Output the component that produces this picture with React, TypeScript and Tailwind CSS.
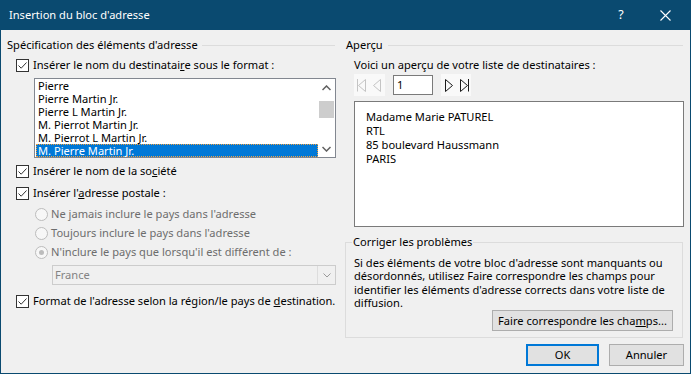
import React from "react";

function CheckBox() {
  return (
    <span className="w-[13px] h-[13px] border border-[#333333] bg-white flex items-center justify-center shrink-0">
      <svg width="11" height="11" viewBox="0 0 11 11">
        <path d="M1.5 5.5 L4.2 8.2 L9.5 2.5" stroke="#333333" strokeWidth="1" fill="none" />
      </svg>
    </span>
  );
}

function Radio({ on }: { on?: boolean }) {
  return (
    <span className="w-[13px] h-[13px] rounded-full border border-[#bcbcbc] bg-[#f7f7f7] flex items-center justify-center shrink-0">
      {on && <span className="w-[5px] h-[5px] rounded-full bg-[#bcbcbc]" />}
    </span>
  );
}

const items = [
  "Pierre",
  "Pierre Martin Jr.",
  "Pierre L Martin Jr.",
  "M. Pierrot Martin Jr.",
  "M. Pierrot L Martin Jr.",
  "M. Pierre Martin Jr.",
];

export default function App() {
  return (
    <div className="w-[691px] h-[374px] bg-[#f0f0f0] border-x border-b border-[#0a4a70] flex flex-col font-['Noto_Sans',sans-serif] text-[11.1px] leading-[16px] text-black overflow-hidden">
      {/* Title bar */}
      <div className="h-[30px] bg-[#0a4a70] flex items-center text-white shrink-0 -mx-px">
        <span className="ml-[9px] flex-1">Insertion du bloc d'adresse</span>
        <span className="w-[14px] text-center text-[12.5px] mr-[32px]">?</span>
        <svg width="11" height="11" viewBox="0 0 11 11" className="mr-[20px]">
          <path d="M0.5 0.5 L10.5 10.5 M10.5 0.5 L0.5 10.5" stroke="white" strokeWidth="1.1" />
        </svg>
      </div>

      <div className="flex flex-1">
        {/* Left column */}
        <div className="w-[339px] flex flex-col pr-[5px] whitespace-nowrap">
          <div className="mt-[7px] h-[16px] flex items-center pl-[6px]">
            <span>Spécification des éléments d'adresse</span>
            <span className="flex-1 h-px bg-[#dcdcdc] ml-[4px]" />
          </div>
          <div className="mt-[4px] h-[16px] flex items-center pl-[15px] gap-[4px]">
            <CheckBox />
            <span>
              Insérer le nom du destinatai<u>r</u>e sous le format :
            </span>
          </div>
          <div className="mt-[5px] ml-[33px] w-[302px] h-[80px] border border-[#828790] bg-white flex">
            <div className="flex-1 flex flex-col">
              {items.map((t, i) => (
                <div
                  key={t}
                  className={
                    i === 5
                      ? "h-[13px] ml-px leading-[11px] pl-[1px] bg-[#0078d7] text-white border border-dotted border-[#f0a040]"
                      : "h-[13px] leading-[13px] pl-[3px]"
                  }
                >
                  {t}
                </div>
              ))}
            </div>
            <div className="w-[17px] flex flex-col items-center">
              <div className="h-[17px] flex items-center justify-center">
                <svg width="9" height="6" viewBox="0 0 9 6">
                  <path d="M0.5 5 L4.5 1 L8.5 5" stroke="#606060" strokeWidth="1.5" fill="none" />
                </svg>
              </div>
              <div className="mt-[5px] w-[15px] h-[17px] bg-[#cdcdcd]" />
              <div className="flex-1" />
              <div className="h-[17px] flex items-center justify-center">
                <svg width="9" height="6" viewBox="0 0 9 6">
                  <path d="M0.5 1 L4.5 5 L8.5 1" stroke="#606060" strokeWidth="1.5" fill="none" />
                </svg>
              </div>
            </div>
          </div>
          <div className="mt-[5px] h-[16px] flex items-center pl-[15px] gap-[4px]">
            <CheckBox />
            <span>
              Insérer le nom de la so<u>c</u>iété
            </span>
          </div>
          <div className="mt-[6px] h-[16px] flex items-center pl-[15px] gap-[4px]">
            <CheckBox />
            <span>
              Insérer l'<u>a</u>dresse postale :
            </span>
          </div>
          <div className="mt-[5px] h-[16px] flex items-center pl-[34px] gap-[3px] text-[#6d6d6d]">
            <Radio />
            <span>Ne jamais inclure le pays dans l'adresse</span>
          </div>
          <div className="mt-[3px] h-[16px] flex items-center pl-[34px] gap-[3px] text-[#6d6d6d]">
            <Radio />
            <span>Toujours inclure le pays dans l'adresse</span>
          </div>
          <div className="mt-[3px] h-[16px] flex items-center pl-[34px] gap-[3px] text-[#6d6d6d]">
            <Radio on />
            <span>N'inclure le pays que lorsqu'il est différent de :</span>
          </div>
          <div className="mt-[5px] ml-[51px] w-[284px] h-[20px] border border-[#cccccc] bg-[#f0f0f0] flex">
            <span className="flex-1 pl-[2px] leading-[18px] text-[#838383]">France</span>
            <span className="w-[18px] border-l border-[#dddddd] flex items-center justify-center">
              <svg width="8" height="5" viewBox="0 0 8 5">
                <path d="M0.5 0.5 L4 4 L7.5 0.5" stroke="#9a9a9a" strokeWidth="1" fill="none" />
              </svg>
            </span>
          </div>
          <div className="mt-[8px] h-[16px] flex items-center pl-[15px] gap-[4px]">
            <CheckBox />
            <span>
              Format de l'adresse selon la région/le pays de <u>d</u>estination.
            </span>
          </div>
        </div>

        {/* Right column */}
        <div className="w-[344px] flex flex-col pl-[5px]">
          <div className="mt-[7px] h-[16px] flex items-center pr-[1px]">
            <span className="ml-[1px]">Aperçu</span>
            <span className="flex-1 h-px bg-[#dcdcdc] ml-[5px]" />
          </div>
          <div className="mt-[4px] h-[16px] flex items-center pl-[9px] whitespace-nowrap">
            Voici un aperçu de votre liste de destinataires :
          </div>
          <div className="mt-[2px] h-[20px] flex items-center pl-[9px]">
            <span className="w-[31px] h-[22px] bg-[#f9f9f9] flex items-center">
              <svg width="31" height="20" viewBox="0 0 31 20">
                <path d="M3.5 4 L3.5 16.5 M11.5 4.5 L4.5 10.5 L11.5 16.5 Z M26.5 4.5 L19.5 10.5 L26.5 16.5 Z" stroke="#c4c4c4" strokeWidth="1" fill="none" />
              </svg>
            </span>
            <span className="ml-[8px] w-[40px] h-[20px] border border-[#7a7a7a] bg-white pl-[3px] leading-[18px]">1</span>
            <span className="ml-[8px] w-[30px] h-[22px] bg-[#f9f9f9] flex items-center">
              <svg width="30" height="20" viewBox="0 0 30 20">
                <path d="M4.5 4.5 L11.5 10.5 L4.5 16.5 Z M19.5 4.5 L26.5 10.5 L19.5 16.5 Z M27.5 4 L27.5 16.5" stroke="#1a1a1a" strokeWidth="1" fill="none" />
              </svg>
            </span>
          </div>
          <div className="mt-[6px] ml-[9px] w-[330px] h-[126px] border border-[#7a7a7a] bg-white pt-[8px] pl-[11px] leading-[14px]">
            <div>Madame Marie PATUREL</div>
            <div>RTL</div>
            <div>85 boulevard Haussmann</div>
            <div>PARIS</div>
          </div>
          <fieldset className="mt-[7px] w-[338px] h-[104px] border border-[#dcdcdc] pl-[8px] pr-[9px] flex flex-col">
            <legend className="-ml-[2px] px-[1px] h-[16px] leading-[16px]">Corriger les problèmes</legend>
            <p className="mt-[6px] leading-[13.4px]">
              Si des éléments de votre bloc d'adresse sont manquants ou désordonnés, utilisez Faire correspondre les champs pour identifier les éléments d'adresse corrects dans votre liste de diffusion.
            </p>
            <div className="flex-1" />
            <div className="flex justify-end mb-[5px]">
              <button className="w-[181px] h-[21px] bg-[#e1e1e1] border border-[#adadad] leading-[19px] whitespace-nowrap">
                Faire correspondre les cha<u>m</u>ps...
              </button>
            </div>
          </fieldset>
          <div className="mt-[6px] flex justify-end gap-[10px]">
            <button className="w-[73px] h-[22px] bg-[#e1e1e1] border-2 border-[#0078d7] leading-[18px]">OK</button>
            <button className="w-[75px] h-[22px] bg-[#e1e1e1] border border-[#adadad] leading-[20px]">Annuler</button>
          </div>
        </div>
      </div>
    </div>
  );
}
